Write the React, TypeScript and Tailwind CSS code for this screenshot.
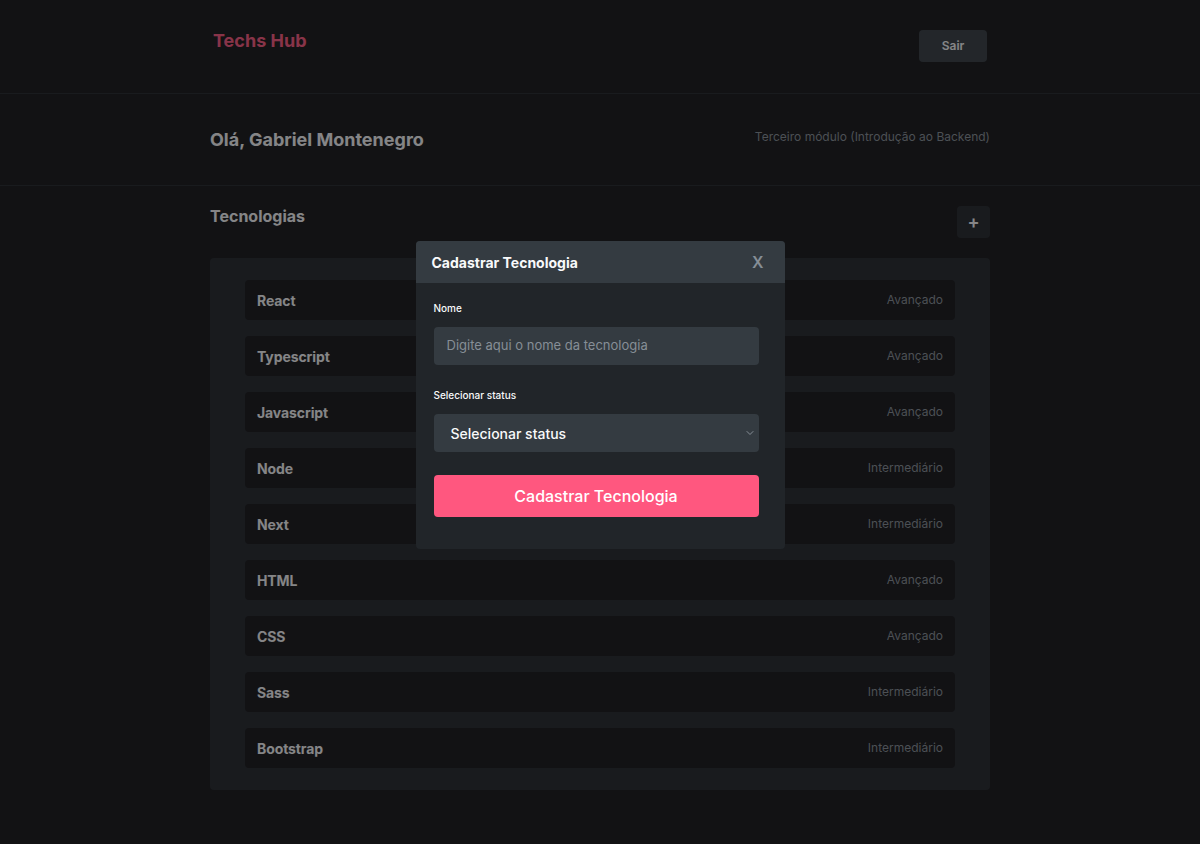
import { ChevronDown } from 'lucide-react';

const techs = [
  { name: 'React', status: 'Avançado' },
  { name: 'Typescript', status: 'Avançado' },
  { name: 'Javascript', status: 'Avançado' },
  { name: 'Node', status: 'Intermediário' },
  { name: 'Next', status: 'Intermediário' },
  { name: 'HTML', status: 'Avançado' },
  { name: 'CSS', status: 'Avançado' },
  { name: 'Sass', status: 'Intermediário' },
  { name: 'Bootstrap', status: 'Intermediário' },
];

export default function App() {
  return (
    <div className="relative min-h-screen bg-[#121214] font-['Inter',sans-serif]">
      {/* Header */}
      <header className="h-[94px] border-b border-[#212529]">
        <div className="mx-auto flex w-[780px] items-start justify-between pl-[3px] pr-[3px] pt-[30px]">
          <h1 className="text-[18px] font-bold leading-[22px] text-[#FF577F]">Techs Hub</h1>
          <button className="h-[32px] w-[68px] rounded-[4px] bg-[#343B41] text-[12px] font-semibold text-[#F8F9FA]">
            Sair
          </button>
        </div>
      </header>

      {/* User info */}
      <section className="h-[92px] border-b border-[#212529]">
        <div className="mx-auto flex h-full w-[780px] items-center justify-between">
          <h2 className="text-[18px] font-bold text-[#F8F9FA]">Olá, Gabriel Montenegro</h2>
          <p className="mb-[5px] text-[12px] text-[#868E96]">Terceiro módulo (Introdução ao Backend)</p>
        </div>
      </section>

      {/* Techs */}
      <main className="mx-auto w-[780px] pt-[20px]">
        <div className="flex items-start justify-between">
          <h3 className="text-[16px] font-bold leading-[20px] text-[#F8F9FA]">Tecnologias</h3>
          <button className="flex h-[32px] w-[33px] items-center justify-center rounded-[4px] bg-[#212529] text-[18px] font-semibold leading-none text-[#F8F9FA]">
            +
          </button>
        </div>
        <ul className="mt-[20px] flex flex-col gap-[16px] rounded-[4px] bg-[#212529] px-[35px] py-[22px]">
          {techs.map((t) => (
            <li
              key={t.name}
              className="flex h-[40px] items-center justify-between rounded-[4px] bg-[#121214] px-[12px]"
            >
              <span className="text-[14px] font-bold tracking-[-0.1px] text-[#F8F9FA]">{t.name}</span>
              <span className="text-[12px] text-[#868E96]">{t.status}</span>
            </li>
          ))}
        </ul>
      </main>

      {/* Modal overlay */}
      <div className="absolute inset-0 flex justify-center bg-[#121214]/50 pt-[241px]">
        <div className="h-[308px] w-[369px] overflow-hidden rounded-[4px] bg-[#212529]">
          <div className="flex h-[42px] items-center justify-between bg-[#343B41] pl-[16px] pr-[21px]">
            <span className="text-[14px] font-bold text-[#F8F9FA]">Cadastrar Tecnologia</span>
            <span className="text-[16px] font-semibold text-[#868E96]">X</span>
          </div>
          <div className="flex flex-col pl-[18px] pt-[18px]">
            <label className="text-[10px] font-medium leading-[14px] text-[#F8F9FA]">Nome</label>
            <div className="mt-[12px] flex h-[38px] w-[325px] items-center rounded-[4px] bg-[#343B41] px-[13px]">
              <span className="text-[13px] text-[#868E96]">Digite aqui o nome da tecnologia</span>
            </div>
            <label className="mt-[23px] text-[10px] font-medium leading-[14px] text-[#F8F9FA]">Selecionar status</label>
            <div className="mt-[12px] flex h-[38px] w-[325px] items-center justify-between rounded-[4px] bg-[#343B41] pl-[17px] pr-[3px]">
              <span className="text-[14px] font-medium text-[#F8F9FA]">Selecionar status</span>
              <ChevronDown size={12} className="text-[#868E96]" />
            </div>
            <button className="mt-[23px] h-[42px] w-[325px] rounded-[4px] bg-[#FF577F] text-[16px] font-medium text-white">
              Cadastrar Tecnologia
            </button>
          </div>
        </div>
      </div>
    </div>
  );
}
